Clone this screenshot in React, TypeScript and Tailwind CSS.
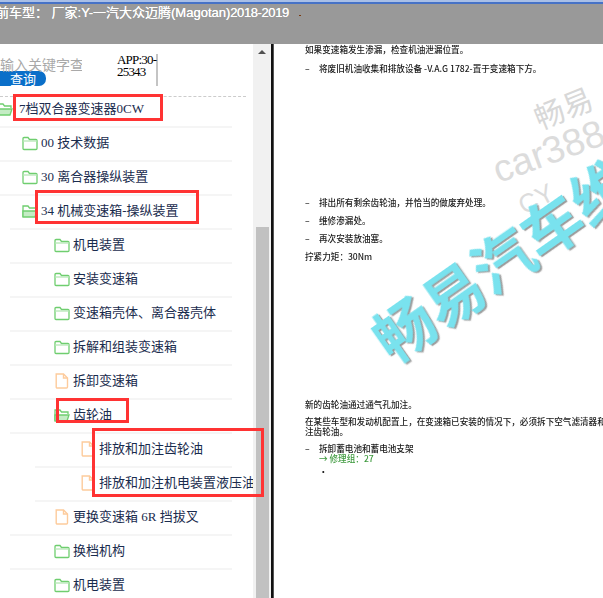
const sans = "font-['Liberation_Serif','Noto_Sans_CJK_SC',serif]";

type Kind = "folder" | "open" | "file";
type Row = { label: string; kind: Kind; indent: string; line: string };

const rows: Row[] = [
  { label: "7档双合器变速器0CW", kind: "open", indent: "ml-[-3px] gap-[6px]", line: "ml-0" },
  { label: "00 技术数据", kind: "folder", indent: "pl-[22px] gap-[3px]", line: "ml-0" },
  { label: "30 离合器操纵装置", kind: "folder", indent: "pl-[22px] gap-[3px]", line: "ml-0" },
  { label: "34 机械变速箱-操纵装置", kind: "open", indent: "pl-[22px] gap-[3px]", line: "ml-[10px]" },
  { label: "机电装置", kind: "folder", indent: "pl-[54px] gap-[3px]", line: "ml-[10px]" },
  { label: "安装变速箱", kind: "folder", indent: "pl-[54px] gap-[3px]", line: "ml-[10px]" },
  { label: "变速箱壳体、离合器壳体", kind: "folder", indent: "pl-[54px] gap-[3px]", line: "ml-[10px]" },
  { label: "拆解和组装变速箱", kind: "folder", indent: "pl-[54px] gap-[3px]", line: "ml-[10px]" },
  { label: "拆卸变速箱", kind: "file", indent: "pl-[54px] gap-[3px]", line: "ml-[10px]" },
  { label: "齿轮油", kind: "open", indent: "pl-[54px] gap-[3px]", line: "ml-[10px]" },
  { label: "排放和加注齿轮油", kind: "file", indent: "pl-[80px] gap-[3px]", line: "ml-[35px]" },
  { label: "排放和加注机电装置液压油", kind: "file", indent: "pl-[80px] gap-[3px]", line: "ml-[35px]" },
  { label: "更换变速箱 6R 挡拔叉", kind: "file", indent: "pl-[54px] gap-[3px]", line: "ml-[10px]" },
  { label: "换档机构", kind: "folder", indent: "pl-[54px] gap-[3px]", line: "ml-[10px]" },
  { label: "机电装置", kind: "folder", indent: "pl-[54px] gap-[3px]", line: "ml-[10px]" },
];

function Icon({ kind }: { kind: Kind }) {
  if (kind === "file") {
    return (
      <svg width="16" height="16" viewBox="0 0 16 16" className="shrink-0" fill="none" stroke="#fdcb9c" strokeWidth="1.4">
        <path d="M2.2 1h7.3l4 4v9a1 1 0 0 1-1 1H3.2a1 1 0 0 1-1-1z" />
        <path d="M9.5 1v4h4" />
      </svg>
    );
  }
  if (kind === "open") {
    return (
      <svg width="16" height="16" viewBox="0 0 16 16" className="shrink-0" fill="none" stroke="#6fce6f" strokeWidth="1.3">
        <path d="M1 14V3h5l1.5 2H14v2" />
        <path d="M1 14V8h14l-2 6z" fill="#c4ecc4" />
      </svg>
    );
  }
  return (
    <svg width="16" height="16" viewBox="0 0 16 16" className="shrink-0" fill="none" stroke="#6fce6f" strokeWidth="1.3">
      <path d="M1 3.5a1 1 0 0 1 1-1h4l1.5 2H14a1 1 0 0 1 1 1v8a1 1 0 0 1-1 1H2a1 1 0 0 1-1-1z" />
      <path d="M1 6h14" stroke="#b5e6b5" />
    </svg>
  );
}

function Doc({ className, children }: { className: string; children: React.ReactNode }) {
  return <p className={`whitespace-nowrap ${className}`}>{children}</p>;
}

function Dash() {
  return <span className="inline-block w-[14px]">–</span>;
}

export default function App() {
  return (
    <div className={`relative h-[598px] w-[603px] overflow-hidden bg-white ${sans}`}>
      <header className="h-[44px] overflow-hidden bg-[#999999]">
        <div className="h-[2px] bg-[#a9bfe6]" />
        <div className="h-[2px] bg-[#4672c6]" />
        <div className="flex items-start justify-between">
          <span className="ml-[-17px] whitespace-nowrap font-['Liberation_Sans','Noto_Sans_CJK_SC',sans-serif] text-[13px] leading-[18px] text-white [text-shadow:0_0_0.6px_#ffffff]">
            当前车型： 厂家:Y-一汽大众迈腾(Magotan)<span className="tracking-[-0.4px]">2018-2019</span>
          </span>
        </div>
        <span className="absolute left-[299px] top-[15px] h-[1px] w-[2px] bg-[#7a3a10]" />
      </header>

      <div className="flex h-[554px]">
        <aside className="flex w-[271px] shrink-0">
          <div className="w-[253px] shrink-0 overflow-hidden">
            <div className="flex h-[52px] items-start">
              <div className="w-[82px] shrink-0 overflow-hidden pt-[13px]">
                <div className="whitespace-nowrap font-['Noto_Sans_CJK_SC',sans-serif] text-[14px] leading-[14px] text-[#a9a9a9]">输入关键字查询</div>
                <button className="flex h-[15px] w-[46px] items-center justify-center rounded-r-[7px] bg-[#0b6fc9] font-['Noto_Sans_CJK_SC',sans-serif] text-[13px] leading-[15px] text-white">查询</button>
              </div>
              <div className="ml-[35px] mt-[10px] h-[32px] w-[41px] border-r-2 border-[#c4c4c4] text-[13px] leading-[12px] tracking-[-0.8px] text-black">
                <div className="whitespace-nowrap">APP:30-</div>
                <div>25343</div>
              </div>
            </div>
            <div className="w-[246px] border-t border-dashed border-[#cccccc]" />
            <div className="mt-[-3px] font-['Liberation_Serif','Noto_Sans_CJK_SC',serif] text-[13px] text-[#1a2c4e]">
              {rows.map((r, i) => (
                <div key={i} className="w-[232px]">
                  <div className={`flex h-[29px] items-center ${r.indent}`}>
                    <Icon kind={r.kind} />
                    <span className="whitespace-nowrap leading-[17px]">{r.label}</span>
                  </div>
                  <div className={`mt-[3px] h-[2px] bg-[#f5f5f5] ${r.line}`} />
                </div>
              ))}
            </div>
          </div>
          <div className="flex w-[18px] shrink-0 flex-col items-center bg-[#f1f1f1]">
            <div className="mt-[6px] h-0 w-0 border-x-[4px] border-b-[4px] border-x-transparent border-b-[#505050]" />
            <div className="mt-[173px] h-[375px] w-[13px] bg-[#c1c1c1]" />
          </div>
        </aside>
        <div className="w-[3px] shrink-0 border-r border-[#555555] bg-[#111111]" />

        <main className="relative min-w-0 flex-1 overflow-hidden pl-[31px] font-['Noto_Sans_CJK_SC',sans-serif] text-[8.6px] font-medium leading-[10px] text-[#1a1a1a]">
          <div className="blur-[0.4px]">
            <Doc className="">如果变速箱发生渗漏，检查机油泄漏位置。</Doc>
            <Doc className="mt-[9px]"><Dash />将废旧机油收集和排放设备 -V.A.G 1782-置于变速箱下方。</Doc>
            <Doc className="mt-[124px]"><Dash />排出所有剩余齿轮油，并恰当的做废弃处理。</Doc>
            <Doc className="mt-[8px]"><Dash />维修渗漏处。</Doc>
            <Doc className="mt-[8px]"><Dash />再次安装放油塞。</Doc>
            <Doc className="mt-[8px]">拧紧力矩：30Nm</Doc>
            <Doc className="mt-[138px]">新的齿轮油通过通气孔加注。</Doc>
            <Doc className="mt-[7px]">在某些车型和发动机配置上，在变速箱已安装的情况下，必须拆下空气滤清器和进气管才能加</Doc>
            <Doc className="">注齿轮油。</Doc>
            <Doc className="mt-[7px]"><Dash />拆卸蓄电池和蓄电池支架</Doc>
            <Doc className="ml-[14px] text-[#3f9a3f]">→ 修理组：27</Doc>
            <Doc className="ml-[14px] mt-[3px]">•</Doc>
          </div>

          <span className="absolute left-[261px] top-[59px] origin-left -rotate-[22deg] whitespace-nowrap text-[30px] font-normal leading-none text-[#d8d8d8]">畅易</span>
          <span className="absolute left-[220px] top-[108px] origin-left -rotate-[20deg] whitespace-nowrap font-['Liberation_Sans',sans-serif] text-[38px] font-normal leading-none text-[#dcdcdc]">car388.com</span>
          <span className="absolute left-[246px] top-[150px] origin-left -rotate-[27deg] whitespace-nowrap font-['Liberation_Sans',sans-serif] text-[26px] font-normal leading-none text-[#dcdcdc]">CY</span>
          <span className="absolute left-[104px] top-[270px] origin-left -rotate-[35deg] whitespace-nowrap text-[60px] font-bold leading-none text-[#79e2ee] [text-shadow:1px_2px_1px_#9a9a9a] blur-[0.3px]">畅易汽车维修</span>
        </main>
      </div>

      <div className="pointer-events-none absolute left-[13px] top-[94px] h-[27px] w-[150px] border-[3px] border-[#ff3333]" />
      <div className="pointer-events-none absolute left-[35px] top-[190px] h-[34px] w-[164px] border-[3px] border-[#ff3333]" />
      <div className="pointer-events-none absolute left-[56px] top-[398px] h-[25px] w-[73px] border-[3px] border-[#ff3333]" />
      <div className="pointer-events-none absolute left-[92px] top-[428px] h-[69px] w-[172px] border-[3px] border-[#ff3333]" />
    </div>
  );
}
